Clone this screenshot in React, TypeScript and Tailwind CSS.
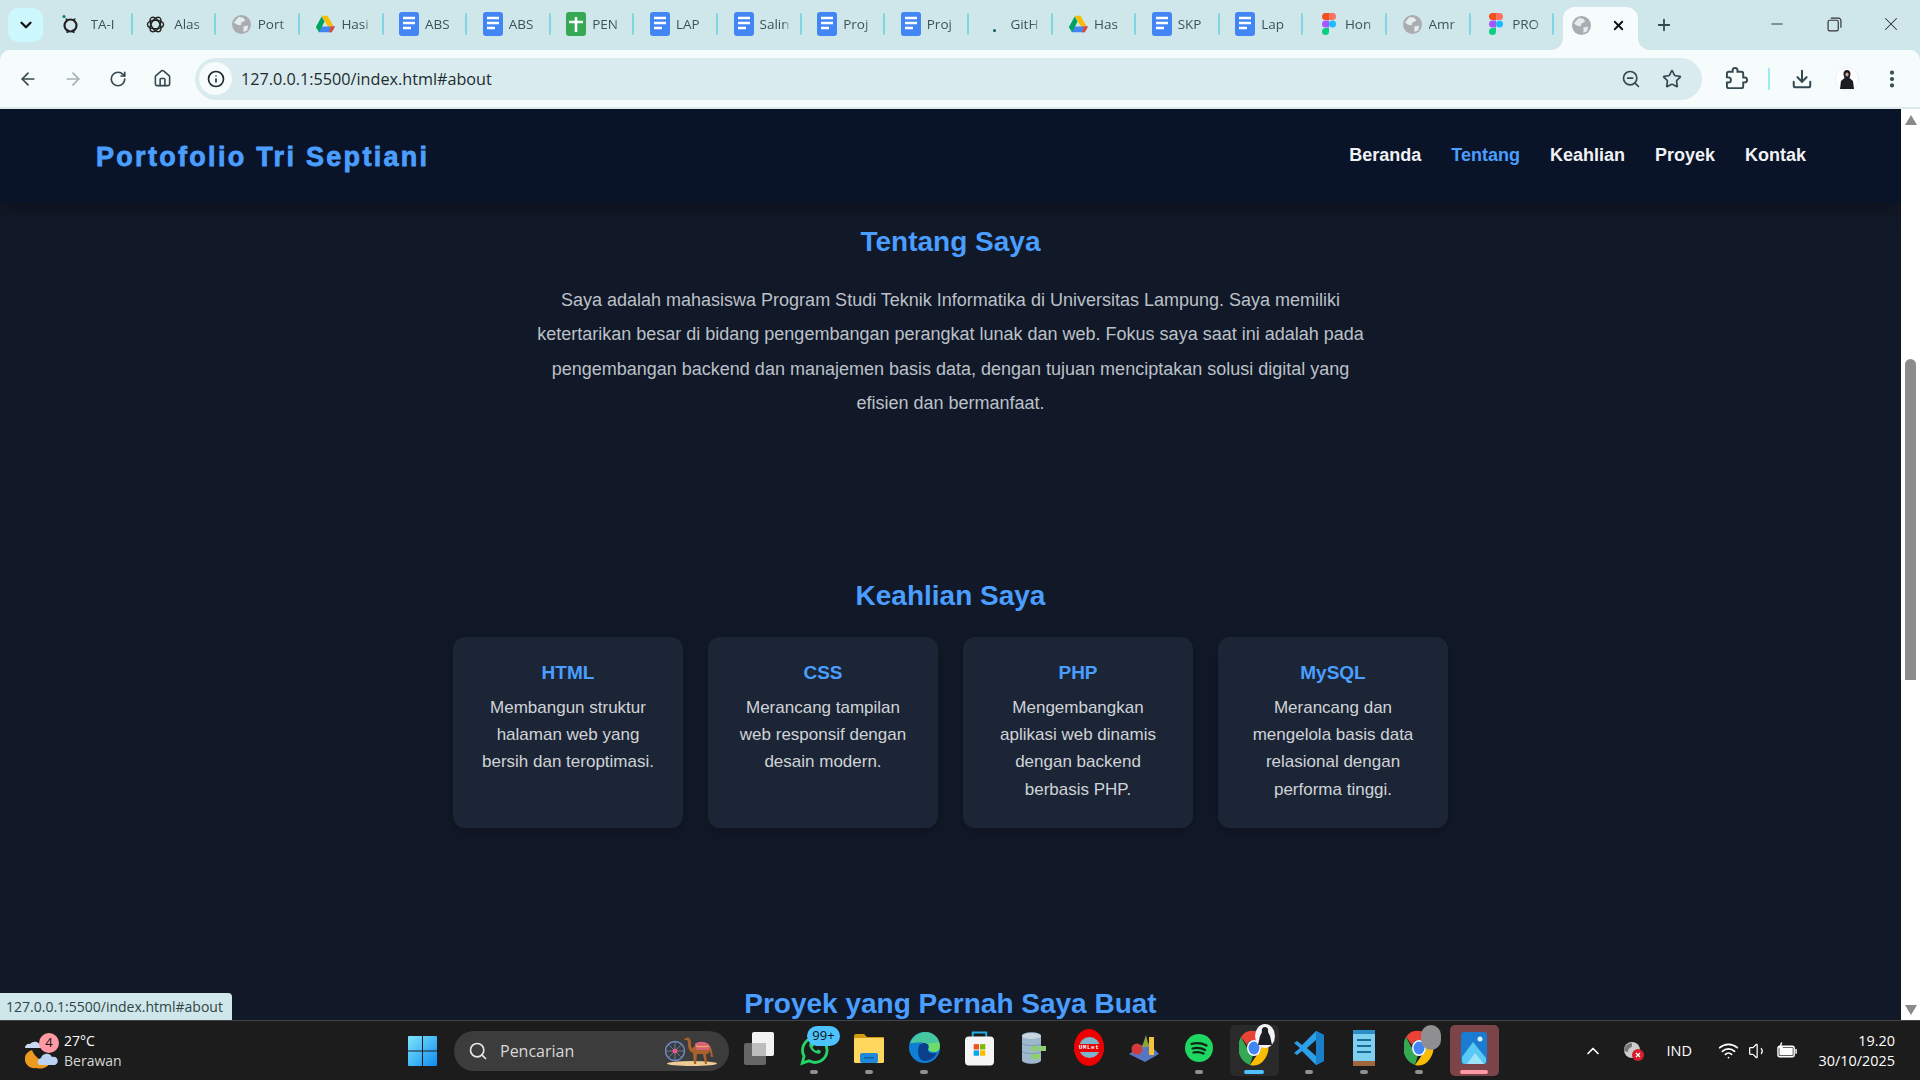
import {
  ArrowLeft, ArrowRight, ChevronDown, ChevronUp, Download, EllipsisVertical, House, Info, Minus, Plus,
  RotateCw, Search, Star, Volume1, Wifi, X, ZoomOut,
} from "lucide-react";
import type { ReactNode } from "react";

const SANS = "font-['Liberation_Sans',Arial,sans-serif]";

/* ---------- favicons ---------- */
function Doc() {
  return (
    <svg viewBox="0 0 20 24" className="h-6 w-5">
      <rect width="20" height="24" rx="3" fill="#4285f4" />
      <path d="M4 6h12M4 11h12M4 16h8" stroke="#fff" strokeWidth="2.4" />
    </svg>
  );
}
function Sheet() {
  return (
    <svg viewBox="0 0 20 24" className="h-6 w-5">
      <rect width="20" height="24" rx="3" fill="#34a853" />
      <path d="M10 5v15M3 10h14" stroke="#fff" strokeWidth="2.6" />
    </svg>
  );
}
function Drive() {
  return (
    <svg viewBox="0 0 24 22" className="h-[20px] w-[20px]">
      <path d="M8 1h7l8 14h-7z" fill="#fbbc04" />
      <path d="M7 14h17l-4 7H4z" fill="#4285f4" />
      <path d="M1 15 8 2l3.5 6L5 21z" fill="#00a35c" />
      <path d="M19 14h5l-4 7h-3z" fill="#ea4335" />
    </svg>
  );
}
function Globe({ className = "h-[19px] w-[19px]" }: { className?: string }) {
  return (
    <svg viewBox="0 0 20 20" className={className}>
      <circle cx="10" cy="10" r="10" fill="#a9adb2" />
      <path d="M7 2 12 3 14 6 10 8 9 11 5 10 2 8zM12 12l5-1-1 5-4 2z" fill="#e4ecee" />
    </svg>
  );
}
function Figma() {
  return (
    <svg viewBox="0 0 14 22" className="h-[22px] w-[14px]">
      <path d="M3.5 0H7v7H3.5a3.5 3.5 0 0 1 0-7z" fill="#f24e1e" />
      <path d="M7 0h3.5a3.5 3.5 0 0 1 0 7H7z" fill="#ff7262" />
      <path d="M3.500 7.500H7v7H3.500a3.500 3.500 0 0 1 0-7z" fill="#a259ff" />
      <circle cx="10.500" cy="11" r="3.500" fill="#1abcfe" />
      <path d="M3.500 15H7v3.500a3.500 3.500 0 1 1-3.500-3.500z" fill="#0acf83" />
    </svg>
  );
}
function GithubMark() {
  return (
    <svg viewBox="0 0 20 20" className="h-[20px] w-[20px] -translate-x-[5px]">
      <circle cx="10.500" cy="11.500" r="6" fill="none" stroke="#222" strokeWidth="2.200" />
      <path d="M7.500 15.500v3.500M13.500 15.500v3.500" stroke="#222" strokeWidth="2" />
      <path d="M6 7 5.500 4l3 1.500M15 7l.5-3-3 1.500" fill="#222" />
      <circle cx="4" cy="2.500" r="1.600" fill="#0b7f8a" />
    </svg>
  );
}
function OpenAiMark() {
  return (
    <svg viewBox="0 0 20 20" className="h-[19px] w-[19px] -translate-x-[3px]" fill="none" stroke="#222" strokeWidth="1.500">
      <ellipse cx="10" cy="10" rx="8.500" ry="4.500" />
      <ellipse cx="10" cy="10" rx="8.500" ry="4.500" transform="rotate(60 10 10)" />
      <ellipse cx="10" cy="10" rx="8.500" ry="4.500" transform="rotate(120 10 10)" />
    </svg>
  );
}
function Dot() {
  return <span className="mt-[12px] block h-[3px] w-[3px] rounded-full bg-[#0b5a63]" />;
}

// only what the strip shows of each title
const TABS: { title: string; icon: ReactNode }[] = [
  { title: "TA-I", icon: <GithubMark /> },
  { title: "Alas", icon: <OpenAiMark /> },
  { title: "Port", icon: <Globe /> },
  { title: "Hasi", icon: <Drive /> },
  { title: "ABS", icon: <Doc /> },
  { title: "ABS", icon: <Doc /> },
  { title: "PEN", icon: <Sheet /> },
  { title: "LAP", icon: <Doc /> },
  { title: "Salin", icon: <Doc /> },
  { title: "Proj", icon: <Doc /> },
  { title: "Proj", icon: <Doc /> },
  { title: "GitH", icon: <Dot /> },
  { title: "Has", icon: <Drive /> },
  { title: "SKP", icon: <Doc /> },
  { title: "Lap", icon: <Doc /> },
  { title: "Hon", icon: <Figma /> },
  { title: "Amr", icon: <Globe /> },
  { title: "PRO", icon: <Figma /> },
];

/* ---------- browser chrome ---------- */
function TabStrip() {
  return (
    <div className="flex h-[50px] shrink-0 items-start bg-[#cfe7ea] font-['Open_Sans',sans-serif]">
      <div className="ml-2 mt-2 flex h-[34px] w-[35px] items-center justify-center rounded-[10px] bg-[#cdf8fe]">
        <ChevronDown className="h-[18px] w-[18px] text-[#111]" strokeWidth={3} />
      </div>
      <div className="ml-[7.500px] flex h-[50px] items-center pb-[2px]">
        {TABS.map((t, i) => (
          <div key={i} className="flex h-[24px] w-[83.630px] items-center">
            <span className="ml-[14px] flex w-[20px] shrink-0 items-center justify-center">{t.icon}</span>
            <span className="ml-[6px] w-[32px] whitespace-nowrap pt-px text-[13.500px] text-[#3d5257] [mask-image:linear-gradient(to_right,black_70%,transparent)]">
              {t.title}
            </span>
            <span className="ml-auto mr-[1.500px] h-[22px] w-[2px] shrink-0 rounded-sm bg-[#7fd6e2]" />
          </div>
        ))}
      </div>
      <div className="relative ml-[7px] mt-[7px] flex h-[43px] w-[75px] items-center rounded-t-[12px] bg-[#f6fcfc] pb-[6px]">
        <svg viewBox="0 0 12 12" className="absolute -left-3 bottom-0 h-3 w-3"><path d="M12 0v12H0A12 12 0 0 0 12 0z" fill="#f6fcfc" /></svg>
        <svg viewBox="0 0 12 12" className="absolute -right-3 bottom-0 h-3 w-3"><path d="M0 0v12h12A12 12 0 0 1 0 0z" fill="#f6fcfc" /></svg>
        <span className="ml-[9px]"><Globe /></span>
        <X className="ml-[20px] h-[15px] w-[15px] text-[#111]" strokeWidth={3} />
      </div>
      <Plus className="ml-[17px] mt-[16px] h-[18px] w-[18px] text-[#34494e]" strokeWidth={2.4} />
      <div className="ml-auto mr-px flex h-[50px] items-center pb-[2px] text-[#333]">
        <span className="flex w-14 justify-center"><Minus className="h-[18px] w-[18px]" strokeWidth={1.300} /></span>
        <span className="flex w-[58px] justify-center">
          <svg viewBox="0 0 14 14" className="h-[15px] w-[15px]" fill="none" stroke="#333" strokeWidth="1.100">
            <rect x="1" y="3" width="9.500" height="10" rx="1.500" />
            <path d="M3.500 1h7a2.500 2.500 0 0 1 2.500 2.500V10" />
          </svg>
        </span>
        <span className="flex w-14 justify-center"><X className="h-[22px] w-[22px]" strokeWidth={1.100} /></span>
      </div>
    </div>
  );
}

function ToolSlot({ children, className = "" }: { children: ReactNode; className?: string }) {
  return <span className={`flex shrink-0 items-center justify-center text-[#35494e] ${className}`}>{children}</span>;
}

function Avatar() {
  return (
    <svg viewBox="0 0 24 24" className="h-6 w-6">
      <circle cx="12" cy="12" r="11.500" fill="#fff" stroke="#dde" strokeWidth="0.500" />
      <path d="M12 3c2.500 0 3.500 2 3.500 4s-1 3-1 4l3.500 3 1 8H5l1-8 3.500-3c0-1-1-2-1-4s1-4 3.500-4z" fill="#1b1d24" />
      <ellipse cx="12" cy="7.500" rx="1.600" ry="2" fill="#c9a48d" />
    </svg>
  );
}

function Toolbar() {
  return (
    <div className="flex h-[57px] shrink-0 items-center rounded-t-[10px] bg-[#f6fcfc] pl-[5px]">
      <ToolSlot className="w-[45px]"><ArrowLeft className="h-[20px] w-[20px]" strokeWidth={2} /></ToolSlot>
      <ToolSlot className="w-[45px] !text-[#a3b0b2]"><ArrowRight className="h-[20px] w-[20px]" strokeWidth={2} /></ToolSlot>
      <ToolSlot className="w-[45px]"><RotateCw className="h-[18px] w-[18px]" strokeWidth={2.200} /></ToolSlot>
      <ToolSlot className="w-[45px]"><House className="h-[19px] w-[19px]" strokeWidth={2} /></ToolSlot>
      <div className="ml-[10px] flex h-[42px] w-[1507px] items-center rounded-full bg-[#d9ebee]">
        <span className="ml-[4px] flex h-[33px] w-[33px] items-center justify-center rounded-full bg-[#f6fcfc]">
          <Info className="h-[18px] w-[18px] text-[#1c2b2e]" strokeWidth={2.200} />
        </span>
        <span className="ml-[9px] pt-[2px] font-['Open_Sans',sans-serif] text-[16.200px] text-[#1d2c30]">127.0.0.1:5500/index.html#about</span>
        <ToolSlot className="ml-auto"><ZoomOut className="h-[20px] w-[20px]" strokeWidth={2} /></ToolSlot>
        <ToolSlot className="ml-[21px] mr-[20px]"><Star className="h-[20px] w-[20px]" strokeWidth={2} /></ToolSlot>
      </div>
      <ToolSlot className="ml-[14px] w-10">
        <svg viewBox="0 0 24 24" className="h-[23px] w-[23px]" fill="none" stroke="currentColor" strokeWidth="2">
          <path d="M20.500 11H19V7c0-1.100-.9-2-2-2h-4V3.500C13 2.120 11.880 1 10.500 1S8 2.120 8 3.500V5H4c-1.100 0-1.990.9-1.990 2v3.800H3.500c1.490 0 2.700 1.210 2.700 2.700s-1.210 2.700-2.700 2.700H2V20c0 1.100.9 2 2 2h13c1.100 0 2-.9 2-2v-4h1.500c1.380 0 2.500-1.120 2.500-2.500S21.880 11 20.500 11z" />
        </svg>
      </ToolSlot>
      <span className="ml-[12px] h-[22px] w-[2px] bg-[#9eeaf5]" />
      <ToolSlot className="ml-[12px] w-10"><Download className="h-[22px] w-[22px]" strokeWidth={2.200} /></ToolSlot>
      <ToolSlot className="ml-[5px] w-10"><Avatar /></ToolSlot>
      <ToolSlot className="ml-[5px] w-10"><EllipsisVertical className="h-[22px] w-[22px]" strokeWidth={2.600} /></ToolSlot>
    </div>
  );
}

/* ---------- portfolio page ---------- */
const NAV = ["Beranda", "Tentang", "Keahlian", "Proyek", "Kontak"];

const SKILLS = [
  { name: "HTML", text: "Membangun struktur halaman web yang bersih dan teroptimasi." },
  { name: "CSS", text: "Merancang tampilan web responsif dengan desain modern." },
  { name: "PHP", text: "Mengembangkan aplikasi web dinamis dengan backend berbasis PHP." },
  { name: "MySQL", text: "Merancang dan mengelola basis data relasional dengan performa tinggi." },
];

function PortfolioPage() {
  return (
    <div className={`min-w-0 flex-1 overflow-hidden bg-[#111827] ${SANS}`}>
      <nav className="flex h-[94px] items-center justify-between bg-[#0a1428] pl-[96px] pr-[95px] shadow-[0_4px_20px_rgba(0,0,0,0.3)]">
        <span className="pt-[2px] text-[27px] font-bold tracking-[2.300px] text-[#4a9eff] [-webkit-text-stroke:0.8px_#4a9eff]">Portofolio Tri Septiani</span>
        <div className="flex gap-[30px] pb-px">
          {NAV.map((n) => (
            <span key={n} className={`text-[18px] font-bold ${n === "Tentang" ? "text-[#4a9eff]" : "text-[#f0f2f5]"}`}>{n}</span>
          ))}
        </div>
      </nav>

      <section className="pt-[22px] text-center">
        <h2 className="text-[28px] font-bold leading-[33px] text-[#4a9eff]">Tentang Saya</h2>
        <p className="mx-auto mt-[25px] w-[840px] text-[18px] leading-[34.400px] text-[#bcc1c9]">
          Saya adalah mahasiswa Program Studi Teknik Informatika di Universitas Lampung. Saya memiliki ketertarikan besar di bidang pengembangan perangkat lunak dan web. Fokus saya saat ini adalah pada pengembangan backend dan manajemen basis data, dengan tujuan menciptakan solusi digital yang efisien dan bermanfaat.
        </p>
      </section>

      <section className="pt-[158px] text-center">
        <h2 className="text-[28px] font-bold leading-[33px] text-[#4a9eff]">Keahlian Saya</h2>
        <div className="mx-auto mt-[25px] grid w-[995px] grid-cols-4 gap-[25px]">
          {SKILLS.map((s) => (
            <div key={s.name} className="h-[191px] rounded-[12px] bg-[#1c2535] px-[25px] pt-[26px] shadow-[0_4px_12px_rgba(0,0,0,0.2)]">
              <h3 className="text-[19px] font-bold leading-[20px] text-[#4a9eff]">{s.name}</h3>
              <p className="mt-[11px] text-[17px] leading-[27.400px] text-[#d0d3d8]">{s.text}</p>
            </div>
          ))}
        </div>
      </section>

      <section className="pt-[159px] text-center">
        <h2 className="text-[28px] font-bold leading-[33px] text-[#4a9eff]">Proyek yang Pernah Saya Buat</h2>
      </section>
    </div>
  );
}

function ScrollBar() {
  return (
    <div className="flex w-[19px] shrink-0 flex-col items-center bg-white">
      <svg viewBox="0 0 12 10" className="mt-[6px] h-[10px] w-[12px]"><path d="M6 0l6 10H0z" fill="#8a8a8a" /></svg>
      <span className="mt-[234px] h-[321px] w-[11px] rounded-t-full bg-[#8c8c8c]" />
      <svg viewBox="0 0 12 10" className="mt-auto mb-[5px] h-[10px] w-[12px]"><path d="M0 0h12L6 10z" fill="#8a8a8a" /></svg>
    </div>
  );
}

/* ---------- taskbar icons ---------- */
function TaskView() {
  return (
    <svg viewBox="0 0 30 34" className="h-[34px] w-[30px]">
      <rect x="0" y="12" width="22" height="22" rx="2" fill="#666" />
      <rect x="8" y="1" width="22" height="24" rx="2" fill="#f2f2f2" />
      <rect x="8" y="12" width="14" height="13" fill="#bdbdbd" />
    </svg>
  );
}
function WhatsApp() {
  return (
    <div className="relative h-[36px] w-[30px]">
      <svg viewBox="0 0 30 34" className="mt-[4px] h-[32px] w-[30px]" fill="none">
        <path d="M2.500 31l2-7.500A13 13 0 1 1 9.500 28.500z" stroke="#25d366" strokeWidth="3" />
        <path d="M10 10c-1 5 5 11 11 11l1.500-3-3.500-1.500-1.500 1.500c-2-1-3-2-4-4l1.500-1.500-1.500-3.500z" fill="#25d366" />
      </svg>
      <span className="absolute -top-[4px] left-[8px] flex h-[20px] w-[33px] items-center justify-center rounded-full bg-[#4cc2ff] font-['Open_Sans',sans-serif] text-[13px] text-[#111]">99+</span>
    </div>
  );
}
function Folder() {
  return (
    <svg viewBox="0 0 30 30" className="h-[32px] w-[30px]">
      <path d="M0 3a2 2 0 0 1 2-2h8l3 3h17v5H0z" fill="#d19a10" />
      <rect y="5" width="30" height="25" rx="1.500" fill="#ffd75e" />
      <rect x="6" y="20" width="18" height="10" rx="2" fill="#1f88d8" />
      <rect x="10" y="24" width="10" height="1.500" fill="#0a5ea8" />
    </svg>
  );
}
function Edge() {
  return (
    <svg viewBox="0 0 30 30" className="h-[31px] w-[31px]">
      <circle cx="15" cy="15" r="15" fill="#0f7fd6" />
      <path d="M1 11C4 2 12 0 16 0c8 0 14 6 14 14 0 4-3 5-7 5-4 0-5-2-4-3 1-3-1-6-5-6-6 0-12 1-13 1z" fill="#47c7a0" />
      <path d="M29 10c1 4 1 8-2 9-4 1-8 0-8-3 2-6-5-8-8-4z" fill="#6fdc6a" />
      <path d="M9 16c0-5 6-7 9-4 2 3-1 5 1 7 2 2 6 2 8 1-2 5-7 8-12 8-5 0-7-7-6-12z" fill="#0a3f8c" />
    </svg>
  );
}
function Store() {
  return (
    <svg viewBox="0 0 30 36" className="h-[36px] w-[29px]">
      <path d="M8 7V2h14v5" fill="none" stroke="#20aee8" strokeWidth="2" />
      <rect y="6" width="30" height="30" rx="4" fill="#f5f5f5" />
      <rect x="9" y="14" width="5.500" height="5.500" fill="#f25022" />
      <rect x="15.500" y="14" width="5.500" height="5.500" fill="#7fba00" />
      <rect x="9" y="20.500" width="5.500" height="5.500" fill="#00a4ef" />
      <rect x="15.500" y="20.500" width="5.500" height="5.500" fill="#ffb900" />
    </svg>
  );
}
function Database() {
  return (
    <svg viewBox="0 0 24 32" className="h-[32px] w-[24px]">
      <path d="M0 4c0-5 19-5 19 0v24c0 5-19 5-19 0z" fill="#9db7cf" />
      <ellipse cx="9.500" cy="4" rx="9.500" ry="3" fill="#c9d6e2" />
      <path d="M0 12c4 2 15 2 19 0M0 20c4 2 15 2 19 0" stroke="#7f99b4" fill="none" />
      <rect x="9" y="14" width="7" height="5" fill="#8fcf72" />
      <rect x="17" y="14" width="7" height="5" fill="#8fcf72" />
      <rect x="9" y="22" width="9" height="5" fill="#8fcf72" />
    </svg>
  );
}
function UmLet() {
  return (
    <div className="relative flex h-[37px] w-[30px] items-center justify-center rounded-[50%] bg-[#f00000]">
      <span className="absolute h-[21px] w-[21px] rounded-full bg-[#7eb3cc]" />
      <span className="relative w-full bg-[#e80000] text-center font-['Liberation_Mono',monospace] text-[6px] font-bold leading-[8px] tracking-[0.5px] text-white">UMLet</span>
    </div>
  );
}
function GeoTool() {
  return (
    <svg viewBox="0 0 30 28" className="h-[28px] w-[30px]">
      <path d="M0 20 18 8l12 12-14 8z" fill="#5676c4" />
      <circle cx="8" cy="15" r="5.500" fill="#d63b3b" />
      <path d="M13 13l4-12 3 12z" fill="#8aa53c" />
      <rect x="20" y="3" width="5" height="18" fill="#f3c43a" />
    </svg>
  );
}
function Spotify() {
  return (
    <svg viewBox="0 0 28 28" className="h-[32px] w-[28px]">
      <ellipse cx="14" cy="14" rx="14" ry="14" fill="#1ed760" />
      <path d="M6.500 10c5-1.500 10-1 15 1.500M7.500 14.500c4-1 8.500-.8 12.500 1.500M8.500 18.500c3.500-.8 7-.5 10 1" stroke="#14201a" strokeWidth="2.200" fill="none" strokeLinecap="round" />
    </svg>
  );
}
function Chrome({ badge }: { badge: "avatar" | "gray" }) {
  return (
    <div className="relative h-[36px] w-[30px]">
      <svg viewBox="0 0 30 36" className="h-[36px] w-[30px]">
        <path d="M15 1a14 17 0 0 1 13 9H15a7 7 0 0 0-7 5L2 7A14 17 0 0 1 15 1z" fill="#ea4335" />
        <path d="M2 7l7 13a7 8 0 0 0 5 5l-3 10A15 18 0 0 1 2 7z" fill="#34a853" />
        <path d="M28 10a15 18 0 0 1-17 25l7-10a7 8 0 0 0 3-11z" fill="#fbbc04" />
        <ellipse cx="15" cy="18" rx="7" ry="8" fill="#fff" />
        <ellipse cx="15" cy="18" rx="5.500" ry="6.500" fill="#4285f4" />
      </svg>
      {badge === "avatar" ? (
        <svg viewBox="0 0 20 24" className="absolute -right-[6px] -top-[6px] h-[24px] w-[20px]">
          <ellipse cx="10" cy="12" rx="10" ry="12" fill="#f4f4f4" />
          <path d="M10 3c3 0 3.500 3 3 5l2 4 2 9H3l2-9 2-4c-.5-2 0-5 3-5z" fill="#1b1d24" />
        </svg>
      ) : (
        <span className="absolute -right-[7px] -top-[5px] h-[25px] w-[20px] rounded-full bg-[#8f8f92]" />
      )}
    </div>
  );
}
function VsCode() {
  return (
    <svg viewBox="0 0 30 36" className="h-[36px] w-[30px]">
      <path d="M22 1l8 4v26l-8 4L8 21l-5 4-3-2 6-5-6-5 3-2 5 4z" fill="#2c9fe8" />
      <path d="M22 1l8 4v26l-8 4z" fill="#1a7fc9" />
      <path d="M22 10v16l-9-8z" fill="#1c1c1c" />
    </svg>
  );
}
function Notepad() {
  return (
    <svg viewBox="0 0 22 36" className="h-[36px] w-[22px]">
      <rect y="2" width="22" height="30" fill="#7fd0ee" />
      <rect y="0" width="22" height="4" fill="#2b8ec7" />
      <rect y="31" width="22" height="5" fill="#a0673a" />
      <path d="M4 10h14M4 16h14M4 22h14" stroke="#1b6a99" strokeWidth="2" />
    </svg>
  );
}
function Photos() {
  return (
    <svg viewBox="0 0 26 32" className="h-[32px] w-[26px]">
      <rect width="26" height="32" rx="3" fill="#1a7bd0" />
      <circle cx="19" cy="7" r="2.500" fill="#d8f0ff" />
      <path d="M1 25 12 10l13 16v3a3 3 0 0 1-3 3H4a3 3 0 0 1-3-3z" fill="#58c8f4" />
      <path d="M6 32l8-11 9 11z" fill="#9fe3fb" />
    </svg>
  );
}

const APPS: { key: string; icon: ReactNode; dot?: "run" | "active" | "pink"; box?: string }[] = [
  { key: "taskview", icon: <TaskView /> },
  { key: "whatsapp", icon: <WhatsApp />, dot: "run" },
  { key: "explorer", icon: <Folder />, dot: "run" },
  { key: "edge", icon: <Edge />, dot: "run" },
  { key: "store", icon: <Store /> },
  { key: "db", icon: <Database /> },
  { key: "umlet", icon: <UmLet /> },
  { key: "geo", icon: <GeoTool /> },
  { key: "spotify", icon: <Spotify />, dot: "run" },
  { key: "chrome", icon: <Chrome badge="avatar" />, dot: "active", box: "bg-[#2a2a2a]" },
  { key: "vscode", icon: <VsCode />, dot: "run" },
  { key: "notepad", icon: <Notepad />, dot: "run" },
  { key: "chrome2", icon: <Chrome badge="gray" />, dot: "run" },
  { key: "photos", icon: <Photos />, dot: "pink", box: "bg-[#7a4449]" },
];

function WeatherIcon() {
  return (
    <div className="relative h-[38px] w-[36px]">
      <svg viewBox="0 0 36 38" className="h-[38px] w-[36px]">
        <path d="M7 18a9 9 0 0 0 4 18c7 2 13-1 15-8-6 3-15 0-19-10z" fill="#ec9a1f" />
        <path d="M0 16a4 4 0 0 1 5-4 6 6 0 0 1 10 1h3v3z" fill="#c9d9f2" />
        <path d="M14 33a4 4 0 0 1 2-7 6 6 0 0 1 11-1 4 4 0 0 1 3 8z" fill="#bcd2f2" />
      </svg>
      <span className="absolute left-[14px] top-[1px] flex h-[20px] w-[20px] items-center justify-center rounded-full bg-[#ff99a4] font-['Open_Sans',sans-serif] text-[13px] text-[#111]">4</span>
    </div>
  );
}

// ferris wheel and camel from the search box
function SearchDoodle() {
  return (
    <svg viewBox="0 0 52 30" className="ml-auto mr-[12px] h-[30px] w-[52px]">
      <ellipse cx="27" cy="27.500" rx="25" ry="2.500" fill="#eecb94" />
      <circle cx="10" cy="15" r="9.500" fill="none" stroke="#5f8fc9" strokeWidth="1.500" />
      <circle cx="10" cy="15" r="9.500" fill="none" stroke="#d8556f" strokeWidth="1" strokeDasharray="1 3" />
      <path d="M10 5.500v19M.5 15h19M3.300 8.300l13.400 13.400M16.700 8.300 3.300 21.700" stroke="#6f97cc" strokeWidth="0.700" />
      <circle cx="10" cy="15" r="2.500" fill="#e8568a" />
      <path d="M19 4c1-2 3-3 5-2 2 1 2 4 2 7 0 2 1 3 2 3 2-4 5-6 9-6 5 0 9 3 10 9l1 6-2 0-1-6c-1 2-2 3-4 3l1 10h-2l-2-10h-6l-1 10h-2l-1-11c-3-1-5-4-5-8 0-2 0-4-1-5z" fill="#a9622a" />
      <path d="M30 8c3-3 11-3 14 1 1 2 1 4 0 5H31z" fill="#d9607a" />
      <path d="M31 10c4 1 9 1 13 0" stroke="#f0c14a" strokeWidth="1" fill="none" />
    </svg>
  );
}

function Taskbar() {
  return (
    <div className="flex h-[60px] shrink-0 items-center border-t border-[#444] bg-[#1c1c1c] font-['Open_Sans',sans-serif] text-white">
      <div className="ml-[25px] flex w-[383px] shrink-0 items-center gap-[3px]">
        <WeatherIcon />
        <div className="text-[14px] leading-[20px]">
          <div>27°C</div>
          <div className="text-[#d6d6d6]">Berawan</div>
        </div>
      </div>
      <svg viewBox="0 0 29 30" className="h-[30px] w-[29px] shrink-0">
        <defs>
          <linearGradient id="win" x1="0" y1="0" x2="1" y2="1">
            <stop offset="0" stopColor="#7ee6fb" />
            <stop offset="1" stopColor="#0f8cf2" />
          </linearGradient>
        </defs>
        <path d="M0 1a1 1 0 0 1 1-1h13v14.500H0zM15 0h13a1 1 0 0 1 1 1v13.500H15zM0 15.500h14V30H1a1 1 0 0 1-1-1zM15 15.500h14V29a1 1 0 0 1-1 1H15z" fill="url(#win)" />
      </svg>
      <div className="ml-[17px] flex h-[40px] w-[275px] shrink-0 items-center rounded-full bg-[#3c3c3c]">
        <Search className="ml-[14px] h-[20px] w-[20px] text-[#e6e6e6]" strokeWidth={2} />
        <span className="ml-[12px] text-[16px] text-[#d8d8d8]">Pencarian</span>
        <SearchDoodle />
      </div>
      <div className="ml-[2.500px] flex shrink-0">
        {APPS.map((a) => (
          <div key={a.key} className="relative flex h-[59px] w-[55px] items-center justify-center">
            {a.box && <span className={`absolute inset-x-[3px] inset-y-[4px] rounded-[5px] ${a.box}`} />}
            <span className="relative -mt-[6px] flex items-center justify-center">{a.icon}</span>
            {a.dot === "run" && <span className="absolute bottom-[6px] h-[4px] w-[8px] rounded-full bg-[#8f8f8f]" />}
            {a.dot === "active" && <span className="absolute bottom-[6px] h-[4px] w-[20px] rounded-full bg-[#4cc2ff]" />}
            {a.dot === "pink" && <span className="absolute bottom-[6px] h-[4px] w-[28px] rounded-full bg-[#ff99a4]" />}
          </div>
        ))}
      </div>
      <ChevronUp className="ml-[81px] h-[20px] w-[20px] shrink-0" strokeWidth={2} />
      <svg viewBox="0 0 22 20" className="ml-[20px] h-[20px] w-[22px] shrink-0">
        <circle cx="9" cy="9" r="8" fill="#ccc" />
        <path d="M1 10a8 8 0 0 1 8-8v4a5 5 0 0 0-4 5z" fill="#777" />
        <circle cx="15" cy="14" r="6" fill="#d4202c" />
        <path d="M13 12l4 4M17 12l-4 4" stroke="#fff" strokeWidth="1.300" />
      </svg>
      <span className="ml-[22px] w-[28px] shrink-0 text-[14.500px]">IND</span>
      <Wifi className="ml-[23px] h-[21px] w-[21px] shrink-0" strokeWidth={2} />
      <Volume1 className="ml-[9px] h-[20px] w-[20px] shrink-0" strokeWidth={1.500} />
      <svg viewBox="0 0 22 20" className="ml-[9px] h-[20px] w-[21px] shrink-0" fill="none" stroke="#fff" strokeWidth="1.500">
        <rect x="1" y="5" width="17" height="11" rx="2" />
        <rect x="2.500" y="6.500" width="14" height="8" fill="#fff" stroke="none" />
        <path d="M20 8v5" />
        <path d="M5 1 3 6h3" />
      </svg>
      <div className="ml-auto mr-[25px] text-right text-[14.400px] leading-[20px]">
        <div>19.20</div>
        <div>30/10/2025</div>
      </div>
    </div>
  );
}

export default function App() {
  return (
    <div className="flex h-screen w-screen flex-col overflow-hidden bg-[#cfe7ea]">
      <TabStrip />
      <Toolbar />
      <div className="h-[2px] shrink-0 bg-[#dde9ea]" />
      <div className="relative flex min-h-0 flex-1">
        <PortfolioPage />
        <ScrollBar />
        <div className="absolute bottom-0 left-0 flex h-[27px] w-[232px] items-center rounded-tr-[4px] bg-[#cfe7ea] pl-[6px] font-['Open_Sans',sans-serif] text-[14px] text-[#2f4448]">
          127.0.0.1:5500/index.html#about
        </div>
      </div>
      <Taskbar />
    </div>
  );
}
